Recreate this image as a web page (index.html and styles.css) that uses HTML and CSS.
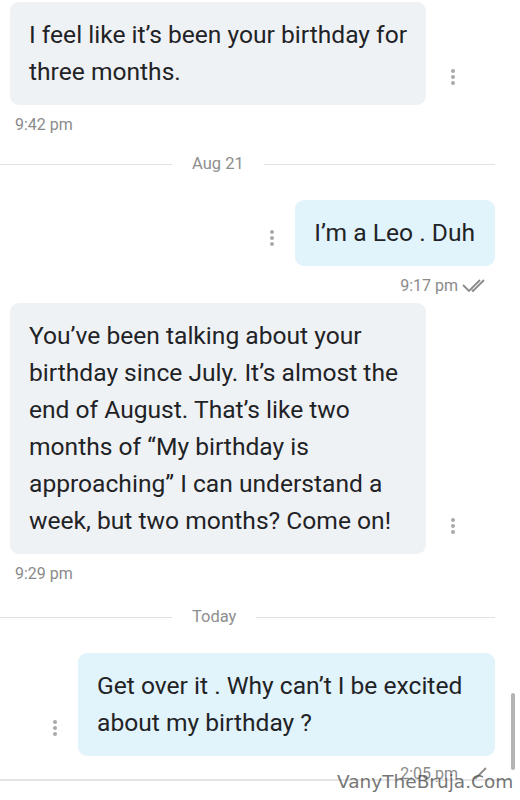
FILE: index.html
```html
<!DOCTYPE html>
<html lang="en">
<head>
  <meta charset="UTF-8">
  <title>Chat</title>
  <meta name="viewport" content="width=device-width, initial-scale=1">
  <link rel="stylesheet" href="styles.css">
</head>
<body>
  <main class="chat">
    <div class="row in">
      <div class="bubble">I feel like it’s been your birthday for three months.</div>
      <svg class="dots" width="6" height="18" viewBox="0 0 6 18"><circle cx="3" cy="3" r="2"/><circle cx="3" cy="9" r="2"/><circle cx="3" cy="15" r="2"/></svg>
    </div>
    <div class="time in-time">9:42 pm</div>

    <div class="day"><span>Aug 21</span></div>

    <div class="row out">
      <svg class="dots" width="6" height="18" viewBox="0 0 6 18"><circle cx="3" cy="3" r="2"/><circle cx="3" cy="9" r="2"/><circle cx="3" cy="15" r="2"/></svg>
      <div class="bubble short">I’m a Leo . Duh</div>
    </div>
    <div class="time out-time">9:17 pm
      <svg class="tick" width="30" height="14" viewBox="0 0 30 14"><path d="M1 6l6 6 11-11M10 11l1 1 11-11"/></svg>
    </div>

    <div class="row in tight">
      <div class="bubble">You’ve been talking about your birthday since July. It’s almost the end of August. That’s like two months of “My birthday is approaching” I can understand a week, but two months? Come on!</div>
      <svg class="dots" width="6" height="18" viewBox="0 0 6 18"><circle cx="3" cy="3" r="2"/><circle cx="3" cy="9" r="2"/><circle cx="3" cy="15" r="2"/></svg>
    </div>
    <div class="time in-time">9:29 pm</div>

    <div class="day today"><span>Today</span></div>

    <div class="row out">
      <svg class="dots" width="6" height="18" viewBox="0 0 6 18"><circle cx="3" cy="3" r="2"/><circle cx="3" cy="9" r="2"/><circle cx="3" cy="15" r="2"/></svg>
      <div class="bubble wide">Get over it . Why can’t I be excited about my birthday ?</div>
    </div>
    <div class="time out-time last">2:05 pm
      <svg class="tick" width="30" height="14" viewBox="0 0 30 14"><path d="M12 11l1 1 11-11"/></svg>
    </div>
  </main>
  <footer class="composer"></footer>
  <div class="scrollbar"></div>
  <div class="watermark">VanyTheBruja.Com</div>
</body>
</html>
```

FILE: styles.css
```css
body {
  font-family: Roboto, 'Noto Sans', Arial, sans-serif;
  background: #fff;
  margin: 0;
  color: #1f2326;
  width: 520px;
  height: 800px;
  overflow: hidden;
  position: relative;
}
.chat {
  padding: 2px 25px 0 10px;
}
.row {
  display: flex;
  align-items: flex-end;
}
.row.in {
  gap: 24px;
}
.row.out {
  justify-content: flex-end;
  gap: 20px;
}
.row.tight {
  margin-top: 7px;
}
.bubble {
  font-size: 24.6px;
  line-height: 37px;
  padding: 14px 12px 15px 19px;
  border-radius: 9px;
  background: #eff2f5;
  width: 385px;
}
.out .bubble {
  background: #e1f3fb;
  width: auto;
  padding: 14px 20px 15px 19px;
}
.out .bubble.wide {
  width: 378px;
}
.dots {
  fill: #a9a9a9;
  margin-bottom: 19px;
  flex: none;
}
.time {
  font-size: 16px;
  color: #8b8b8b;
  line-height: 20px;
  margin-top: 10px;
}
.in-time {
  padding-left: 5px;
}
.out-time {
  display: flex;
  justify-content: flex-end;
  align-items: center;
  gap: 4px;
  padding-right: 3px;
}
.out-time.last {
  margin-top: 8px;
}
.tick {
  fill: none;
  stroke: #8b8b8b;
  stroke-width: 1.8;
}
.day {
  display: flex;
  align-items: center;
  gap: 20px;
  font-size: 16.5px;
  color: #8e8e8e;
  line-height: 20px;
  margin: 19px 0 26px -10px;
}
.day.today {
  margin-top: 23px;
}
.day::before, .day::after {
  content: '';
  height: 1px;
  background: #e2e2e2;
}
.day::before {
  width: 172px;
}
.day::after {
  flex: 1;
}
.composer {
  position: absolute;
  left: 0;
  right: 10px;
  top: 779px;
  border-top: 2px solid #e4e4e4;
}
.scrollbar {
  position: absolute;
  left: 511px;
  top: 693px;
  width: 4px;
  height: 77px;
  border-radius: 2px;
  background: #b3b3b3;
}
.watermark {
  position: absolute;
  left: 337px;
  top: 771px;
  font-family: 'DejaVu Sans', sans-serif;
  font-size: 18.5px;
  color: rgba(80, 80, 80, 0.8);
}
```
